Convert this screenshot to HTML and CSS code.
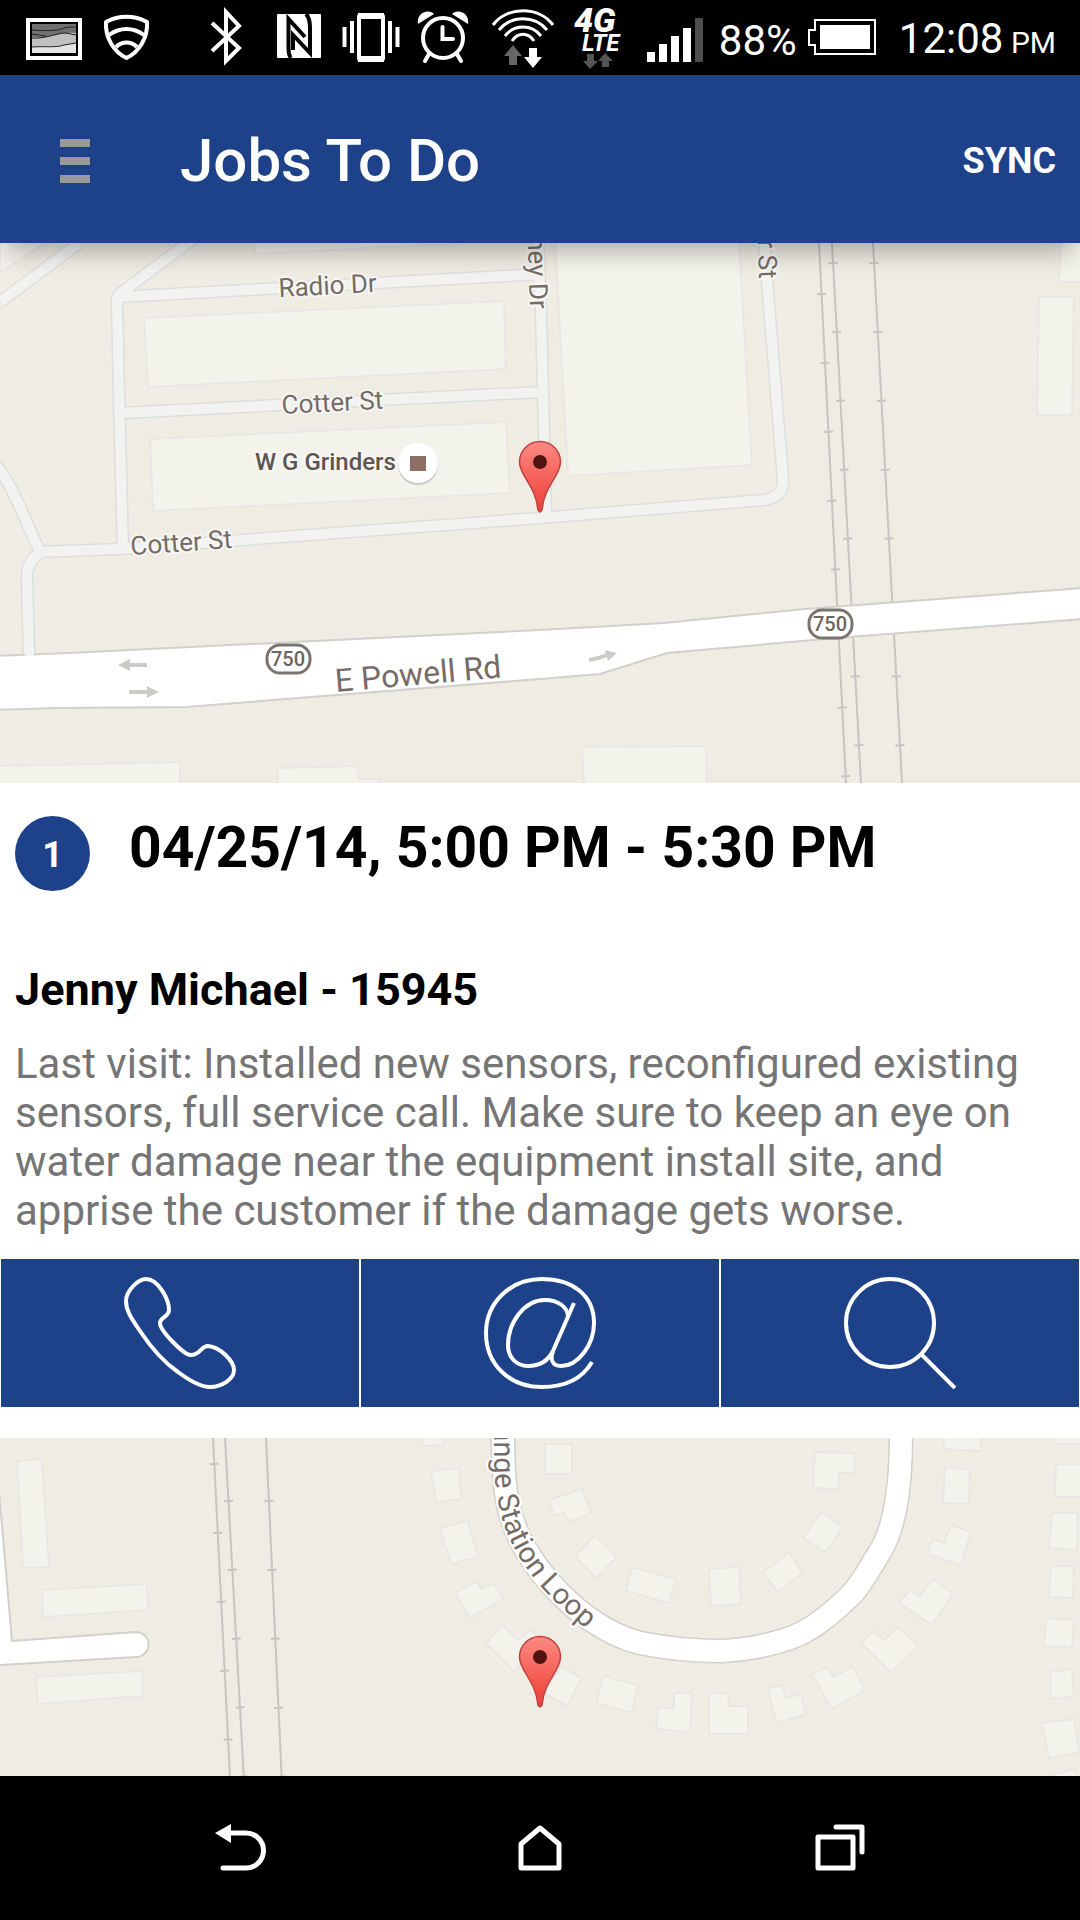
FILE: index.html
```
<!DOCTYPE html>
<html lang="en">

<head>
    <meta charset="UTF-8">
    <meta name="viewport" content="width=device-width">
    <title>Jobs To Do</title>
    <link rel="stylesheet" href="styles.css">
</head>

<body>
    <!-- Shared map pin -->
    <svg class="defs" aria-hidden="true">
        <defs>
            <linearGradient id="pinFill" x1="0" y1="0" x2="0" y2="1">
                <stop offset="0" stop-color="#fb8a84" />
                <stop offset="0.7" stop-color="#f2544b" />
                <stop offset="1" stop-color="#e8433c" />
            </linearGradient>
            <symbol id="pin" viewBox="0 0 44 74">
                <path d="M22 1.500C10.500 1.500 1.500 10.500 1.500 22C1.500 36 18 46 20 70Q22 74 24 70C26 46 42.500 36 42.500 22C42.500 10.500 33.500 1.500 22 1.500Z" fill="url(#pinFill)" stroke="#c0433f" stroke-width="1.500" />
                <circle cx="22" cy="22" r="7" fill="#4f1312" />
            </symbol>
        </defs>
    </svg>

    <div class="status-bar">
        <svg class="status-icon" width="72" height="75" viewBox="24 0 72 75">
            <path d="M28 20H80V58H28Z" fill="#000" stroke="#fff" stroke-width="4" />
            <path d="M32 24H76V53H32Z" fill="#c0c0c0" />
            <path d="M32 24H76V33C66 32 60 34 52 36C44 38 40 38 32 37Z" fill="#707070" />
            <path d="M32 47C44 46 54 47 62 46C68 44 72 43 76 44V53H32Z" fill="#e4e4e4" />
            <path d="M32 30C46 31 58 31 64 28C68 27 72 27 76 27M32 38C46 39 56 33 66 33L76 35M32 47C44 46 56 48 64 45L76 43M32 34L46 36" fill="none" stroke="#222" />
        </svg>
        <svg class="status-icon" width="60" height="75" viewBox="96 0 60 75">
            <g fill="none" stroke="#fff" stroke-width="4" stroke-linejoin="round">
                <path d="M106 22C119 15 134 15 147 22C148 38 139 52 126.500 58C114 52 105 38 106 22Z" />
                <path d="M109 35C120 27 133 27 144 35M116 47C122 41 131 41 137 47" />
            </g>
        </svg>

        <div class="status-right">
            <svg class="status-icon" width="52" height="75" viewBox="206 0 52 75">
                <path d="M211 23L238 48L225 61V12L238 26L211 51" fill="none" stroke="#fff" stroke-width="4" />
            </svg>
            <svg class="status-icon" width="74" height="75" viewBox="258 0 74 75">
                <rect x="276" y="14" width="44" height="44" rx="1" fill="#fff" />
                <path d="M290 58C287 55 287.500 50 287.500 44V19L304 37M305 14C308 17 309 22 309 28V53L292 35V50" fill="none" stroke="#000" stroke-width="4" />
            </svg>
            <svg class="status-icon" width="74" height="75" viewBox="332 0 74 75">
                <rect x="358" y="15" width="24" height="45" rx="2" fill="none" stroke="#fff" stroke-width="4" />
                <path d="M357 16H383M357 59H383" stroke="#fff" stroke-width="6" />
                <path d="M343.500 27V47M351 21V53M389 21V53M396.500 27V47" stroke="#fff" stroke-width="4" />
            </svg>
            <svg class="status-icon" width="74" height="75" viewBox="406 0 74 75">
                <circle cx="442" cy="38" r="20" fill="none" stroke="#fff" stroke-width="4" />
                <path d="M417 24C415 14 426 8 433 14ZM467 24C469 14 458 8 451 14Z" fill="#fff" />
                <path d="M428 54L424 61M456 54L460 61" stroke="#fff" stroke-width="4" stroke-linecap="round" />
                <path d="M441.500 27V39H452" fill="none" stroke="#fff" stroke-width="4" stroke-linecap="round" />
            </svg>
            <svg class="status-icon" width="84" height="75" viewBox="480 0 84 75">
                <path d="M492 25C506 6 538 6 552 25M498 30C510 15 534 15 546 30M504 36C513 24 531 24 540 36M511 41C517 32 527 32 533 41" fill="none" stroke="#fff" stroke-width="3" />
                <path d="M512 45L521 56H516V65H508V56H503Z" fill="#666" />
                <path d="M532 68L523 57H528V48H536V57H541Z" fill="#fff" />
            </svg>
            <svg class="status-icon" width="74" height="75" viewBox="564 0 74 75">
                <text class="net-type" x="573" y="32">4G</text>
                <text class="net-lte" x="581" y="51">LTE</text>
                <path d="M589 69L582 61H586V54H593V61H597Z" fill="#555" />
                <path d="M604 53L597 61H601V67H608V61H612Z" fill="#555" />
            </svg>
            <svg class="status-icon" width="80" height="75" viewBox="638 0 80 75">
                <path d="M646 52H654V62H646ZM658 44H666V62H658ZM670 36H678V62H670ZM682 28H690V62H682Z" fill="#fff" />
                <path d="M694 18H702V62H694Z" fill="#4d4d4d" />
            </svg>
            <span class="status-text">88%</span>
            <svg class="status-icon" width="102" height="75" viewBox="796 0 102 75">
                <path d="M814 20H874V54H814V45H808V30H814Z" fill="none" stroke="#fff" stroke-width="2" />
                <rect x="819" y="25" width="50" height="24" fill="#fff" />
            </svg>
            <span class="status-text">12:08<small> PM</small></span>
        </div>
    </div>

    <header class="app-bar">
        <button class="menu-button" aria-label="Menu">
            <span class="menu-line"></span>
            <span class="menu-line"></span>
            <span class="menu-line"></span>
        </button>
        <h1>Jobs To Do</h1>
        <button class="sync-button">SYNC</button>
    </header>

    <main class="job-list">
        <article class="job">
            <svg class="map" viewBox="0 0 1080 540" role="img" aria-label="Map of Cotter St">
                <g class="building">
                    <path d="M0 -2H48L0 30Z" />
                    <path d="M144 75L504 58L506 126L148 144Z" />
                    <path d="M150 196L506 179L510 250L153 268Z" />
                    <path d="M254 -2L255 11L465 0Z" />
                    <path d="M555 -2H739L752 222L568 233Z" />
                    <path d="M1039 54H1074L1072 172H1037Z" />
                    <path d="M1061 -2H1082V39H1059Z" />
                    <path d="M-2 523L180 519V542H-2Z" />
                    <path d="M277 525L357 523L359 536H379V542H278Z" />
                    <path d="M582 504L706 503L707 542H584Z" />
                </g>

                <!-- Railway tracks -->
                <g class="rail">
                    <path d="M819 0L846 540M832 0L861 540M873 0L902 540" />
                </g>
                <g class="rail-ties">
                    <path d="M819 0L846 540" stroke-dashoffset="-50" />
                    <path d="M832 0L861 540M873 0L902 540" stroke-dashoffset="-19" />
                </g>

                <g class="street-edge">
                    <path d="M79 0L0 59M193 -4L121 50Q117 52 117 58L119 154L123 306M117 54L541 31M121 170L541 149M538 -4L541 70L546 270" />
                    <path d="M-6 220L4 233C16 252 24 274 40 309L119 306L540 275L764 257Q784 254 783 236L767 37L764 -4M41 310Q28 315 27 333L29 414" />
                </g>
                <g class="street">
                    <path d="M79 0L0 59M193 -4L121 50Q117 52 117 58L119 154L123 306M117 54L541 31M121 170L541 149M538 -4L541 70L546 270" />
                    <path d="M-6 220L4 233C16 252 24 274 40 309L119 306L540 275L764 257Q784 254 783 236L767 37L764 -4M41 310Q28 315 27 333L29 414" />
                </g>

                <path class="road" d="M-4 413L69 410L540 387L664 380L805 366L1084 345V376L836 395L667 410L600 431L540 436L186 464L58 465L-4 467Z" />
                <path d="M25 406H34V413H25Z" fill="#f2f2f0" />
                <g class="arrow">
                    <path d="M147 422H128M129 449H149M589 417Q598 416 607 412" />
                    <path class="arrow-head" d="M118 422L130 416V428ZM159 449L147 443V455ZM617 410L605 407L608 418Z" />
                </g>

                <g class="map-label">
                    <text x="279" y="54" transform="rotate(-3 279 54)">Radio Dr</text>
                    <text x="282" y="171" transform="rotate(-3 282 171)">Cotter St</text>
                    <text x="131" y="312" transform="rotate(-4 131 312)">Cotter St</text>
                    <text x="530" y="66" transform="rotate(88 530 66)" text-anchor="end">ney Dr</text>
                    <text x="759" y="36" transform="rotate(88 759 36)" text-anchor="end">r St</text>
                    <text class="label-road" x="336" y="449" transform="rotate(-5 336 449)">E Powell Rd</text>
                    <text class="label-place" x="255" y="227">W G Grinders</text>
                </g>

                <circle cx="418" cy="222" r="20" fill="#c9c8c4" />
                <circle cx="418" cy="220" r="20" fill="#fff" />
                <rect x="410" y="213" width="16" height="15" fill="#8d6e63" />

                <g class="shield">
                    <rect x="267" y="402" width="43" height="28" rx="13" />
                    <text x="288" y="423">750</text>
                    <rect x="809" y="367" width="43" height="28" rx="13" />
                    <text x="830" y="388">750</text>
                </g>

                <use href="#pin" x="518" y="197" width="44" height="74" />
            </svg>

            <div class="job-body">
                <div class="job-header">
                    <span class="job-number">1</span>
                    <h2>04/25/14, 5:00 PM - 5:30 PM</h2>
                </div>
                <h3>Jenny Michael - 15945</h3>
                <p class="description">Last visit: Installed new sensors, reconfigured existing sensors, full service call. Make sure to keep an eye on water damage near the equipment install site, and apprise the customer if the damage gets worse.</p>
            </div>

            <div class="job-actions">
                <button aria-label="Call">
                    <svg viewBox="0 0 112 112">
                        <path d="M22 2C14 2 2 14 2 24C2 34 8 42 16 54C26 69 38 84 54 95C66 104 78 110 86 110C98 110 110 102 110 93C110 84 96 70 84 69C77 69 76 78 67 78C60 78 36 54 36 46C36 40 45 40 45 33C45 22 34 2 22 2Z" />
                    </svg>
                </button>
                <button aria-label="Email">
                    <svg viewBox="0 0 112 112">
                        <path d="M90 26L69 74C66 82 68 89 77 89C94 89 110 68 110 46C110 18 88 2 58 2C26 2 2 26 2 56C2 88 26 110 58 110C80 110 98 102 108 85" />
                        <path d="M84 40C84 30 74 23 61 23C40 23 24 46 24 68C24 80 32 89 44 89C56 89 64 84 69 74" />
                    </svg>
                </button>
                <button aria-label="View details">
                    <svg viewBox="0 0 112 112">
                        <circle cx="46" cy="46" r="44" />
                        <path d="M77 77L111 111" />
                    </svg>
                </button>
            </div>
        </article>

        <article class="job">
            <svg class="map" viewBox="0 0 1080 540" role="img" aria-label="Map of Station Loop">
                <g class="building">
                    <path d="M17 23L42 21L49 129L23 130ZM42 152L147 146L148 172L43 179ZM36 239L142 233L143 258L38 266Z" />
                    <path d="M421 -2H444V7L423 8ZM431 33L459 30L461 61L436 64ZM440 90L468 83L478 119L451 126Z" />
                    <path d="M455 155L477 143L481 151L494 145L503 161L470 180ZM486 205L503 188L518 202L530 192L545 205L514 233Z" />
                    <path d="M545 6H572V36H545ZM549 62L582 51L591 75L569 84L564 75L554 78ZM595 97L617 119L597 140L575 119Z" />
                    <path d="M632 129L676 141L669 165L626 153ZM709 131L739 129L741 166L711 168ZM763 134L789 115L803 135L778 154Z" />
                    <path d="M821 74L843 89L826 114L803 100ZM815 14L855 15L854 35H839L838 51L813 50Z" />
                    <path d="M945 -2H981V13L943 11ZM945 30L970 31L969 66L943 65ZM951 87L971 94L961 127L927 116L933 101L944 105Z" />
                    <path d="M933 141L953 155L932 187L899 165L910 152L920 158ZM899 189L918 208L891 235L861 205L874 193L884 202Z" />
                    <path d="M853 229L865 252L832 271L812 236L828 229L833 239ZM767 250L782 247L786 260L801 256L806 276L777 285Z" />
                    <path d="M709 255H728L729 268H748V296H709ZM674 255H692L690 294L656 291L658 270H674Z" />
                    <path d="M603 238L638 247L632 275L596 265ZM561 229L582 240L567 268L543 255Z" />
                    <path d="M1054 -2H1082V6H1054ZM1056 26H1082V59H1055ZM1052 75H1078L1077 112L1049 110ZM1051 128H1074L1073 160L1049 159Z" />
                    <path d="M1046 180L1074 182L1072 209L1044 208ZM1050 234L1072 231L1074 258L1051 261ZM1042 285L1074 281L1080 314L1049 320ZM1048 338L1075 331L1080 360L1052 364Z" />
                </g>

                <g class="rail">
                    <path d="M213 0L240 540M225 0L255 540M266 0L291 540" />
                </g>
                <g class="rail-ties">
                    <path d="M213 0L240 540" stroke-dashoffset="-25" />
                    <path d="M225 0L255 540M266 0L291 540" stroke-dashoffset="-62" />
                </g>

                <path class="road" d="M-2 42L12 203L136 194A12 12 0 0 1 136 219L-2 227Z" />
                <path class="loop-edge" d="M503 -4C503 30 504 48 508 66C514 96 530 122 550 145C572 170 604 196 640 205C670 211 700 213 720 213C750 212 785 204 804 194C824 183 840 168 852 156C862 145 870 130 881 112C890 97 894 80 897 60C900 40 901 20 901 -4" />
                <path class="loop" d="M503 -4C503 30 504 48 508 66C514 96 530 122 550 145C572 170 604 196 640 205C670 211 700 213 720 213C750 212 785 204 804 194C824 183 840 168 852 156C862 145 870 130 881 112C890 97 894 80 897 60C900 40 901 20 901 -4" />

                <path id="loopLabel" d="M494 -60V10C494 36 495 52 499 68C505 98 522 128 543 151C557 166 572 179 586 191" fill="none" />
                <text class="map-label label-loop"><textPath href="#loopLabel" startOffset="100%" text-anchor="end">ange Station Loop</textPath></text>

                <use href="#pin" x="518" y="197" width="44" height="74" />
            </svg>
        </article>
    </main>

    <nav class="nav-bar">
        <button aria-label="Back">
            <svg viewBox="0 0 60 60">
                <path d="M5 15L21 6V25Z" fill="#fff" stroke="none" />
                <path d="M20 15H36A17 17 0 0 1 36 50H13" />
            </svg>
        </button>
        <button aria-label="Home">
            <svg viewBox="0 0 60 60">
                <path d="M30 10L49 26V50H11V26Z" />
            </svg>
        </button>
        <button aria-label="Recent apps">
            <svg viewBox="0 0 60 60">
                <path d="M8 19H43V50H8Z" />
                <path d="M26 9H52V34" />
            </svg>
        </button>
    </nav>
</body>

</html>
```
FILE: styles.css
```
:root {
    --blue: #1e4289;
    --map-ground: #efece3;
    --map-building: #f4f3eb;
    --text-secondary: #757575;
}

* {
    box-sizing: border-box;
}

body {
    margin: 0;
    height: 100vh;
    display: flex;
    flex-direction: column;
    background-color: #fff;
    color: #000;
    font-family: Roboto, "Liberation Sans", sans-serif;
}

button {
    border: none;
    margin: 0;
    padding: 0;
    background: none;
    color: inherit;
    font: inherit;
    cursor: pointer;
}

h1,
h2,
h3,
p {
    margin: 0;
}

.defs {
    position: absolute;
    width: 0;
    height: 0;
}

/* Status bar */
.status-bar {
    display: flex;
    align-items: center;
    flex: none;
    height: 75px;
    padding: 0 24px;
    background-color: #000;
    color: #fff;
}

.status-icon {
    display: block;
    flex: none;
}

.status-right {
    display: flex;
    align-items: center;
    margin-left: auto;
}

.status-text {
    font-size: 42px;
    line-height: 48px;
    padding-top: 6px;
    white-space: nowrap;
}

.status-text small {
    font-size: 30px;
}

.net-type {
    fill: #fff;
    font-size: 34px;
    font-style: italic;
    font-weight: 900;
}

.net-lte {
    fill: #fff;
    font-size: 24px;
    font-style: italic;
    font-weight: 700;
}

/* App bar */
.app-bar {
    position: relative;
    z-index: 1;
    display: flex;
    align-items: center;
    flex: none;
    height: 168px;
    padding: 4px 24px 0 60px;
    background-color: var(--blue);
    color: #fff;
    box-shadow: 0 14px 24px -6px rgba(0, 0, 0, 0.3);
}

.app-bar h1 {
    margin-left: 90px;
    font-size: 60px;
    font-weight: 500;
    line-height: 72px;
}

.menu-button {
    display: flex;
    flex-direction: column;
    gap: 10px;
}

.menu-line {
    width: 30px;
    height: 8px;
    background-color: #999;
}

.sync-button {
    margin-left: auto;
    font-size: 36px;
    font-weight: 700;
}

/* Job list */
.job-list {
    flex: 1;
    min-height: 0;
    overflow-y: auto;
    scrollbar-width: none;
}

.job {
    margin-bottom: 31px;
}

.job-body {
    padding: 33px 15px 24px;
}

.job-header {
    display: flex;
    align-items: flex-start;
    gap: 39px;
    margin-bottom: 73px;
}

.job-number {
    display: flex;
    align-items: center;
    justify-content: center;
    flex: none;
    width: 75px;
    height: 75px;
    padding-top: 2px;
    border-radius: 50%;
    background-color: var(--blue);
    color: #fff;
    font-size: 36px;
    font-weight: 700;
}

.job-header h2 {
    font-size: 57px;
    font-weight: 700;
    line-height: 64px;
}

.job-body h3 {
    font-size: 45px;
    font-weight: 700;
    line-height: 52px;
    margin-bottom: 23px;
}

.description {
    color: var(--text-secondary);
    font-size: 42px;
    line-height: 49px;
}

.job-actions {
    display: grid;
    grid-template-columns: repeat(3, 1fr);
    gap: 2px;
    padding: 0 1px;
}

.job-actions button {
    display: flex;
    align-items: center;
    justify-content: center;
    height: 148px;
    background-color: var(--blue);
}

.job-actions svg {
    width: 112px;
    height: 112px;
    fill: none;
    stroke: #fff;
    stroke-width: 4;
}

/* Map */
.map {
    display: block;
    width: 100%;
    height: auto;
    background-color: var(--map-ground);
}

.building {
    fill: var(--map-building);
    stroke: #e8e7e2;
    stroke-width: 2;
}

.street,
.street-edge,
.loop,
.loop-edge {
    fill: none;
    stroke-linejoin: round;
}

.street-edge {
    stroke: #dededd;
    stroke-width: 13;
}

.street {
    stroke: #f2f2f0;
    stroke-width: 10;
}

.road {
    fill: #fff;
    stroke: #d2d0ca;
    stroke-width: 2;
}

.loop-edge {
    stroke: #d2d0ca;
    stroke-width: 25;
}

.loop {
    stroke: #fff;
    stroke-width: 22;
}

.rail {
    stroke: #c6c5c2;
    stroke-width: 2;
}

.rail-ties {
    fill: none;
    stroke: #c6c5c2;
    stroke-width: 9;
    stroke-dasharray: 2 67;
}

.arrow {
    fill: none;
    stroke: #cbcbc8;
    stroke-width: 4;
}

.arrow-head {
    fill: #cbcbc8;
    stroke: none;
}

.map-label {
    fill: #766c67;
    stroke: #f7f6f2;
    stroke-width: 4;
    stroke-linejoin: round;
    paint-order: stroke;
    font-size: 26px;
}

.label-road {
    font-size: 32px;
    stroke: #fff;
}

.label-loop {
    font-size: 29px;
    stroke: #fff;
}

.label-place {
    fill: #5c5552;
    font-size: 24px;
    font-weight: 500;
}

.shield rect {
    fill: #fff;
    stroke: #7a736f;
    stroke-width: 3;
}

.shield text {
    fill: #6b6460;
    font-size: 20px;
    font-weight: 500;
    text-anchor: middle;
}

/* Android navigation */
.nav-bar {
    display: flex;
    align-items: center;
    flex: none;
    height: 144px;
    padding: 0 90px;
    background-color: #000;
}

.nav-bar button {
    display: flex;
    justify-content: center;
    flex: 1;
}

.nav-bar svg {
    width: 60px;
    height: 60px;
    fill: none;
    stroke: #fff;
    stroke-width: 5;
    stroke-linecap: round;
    stroke-linejoin: round;
}
```
